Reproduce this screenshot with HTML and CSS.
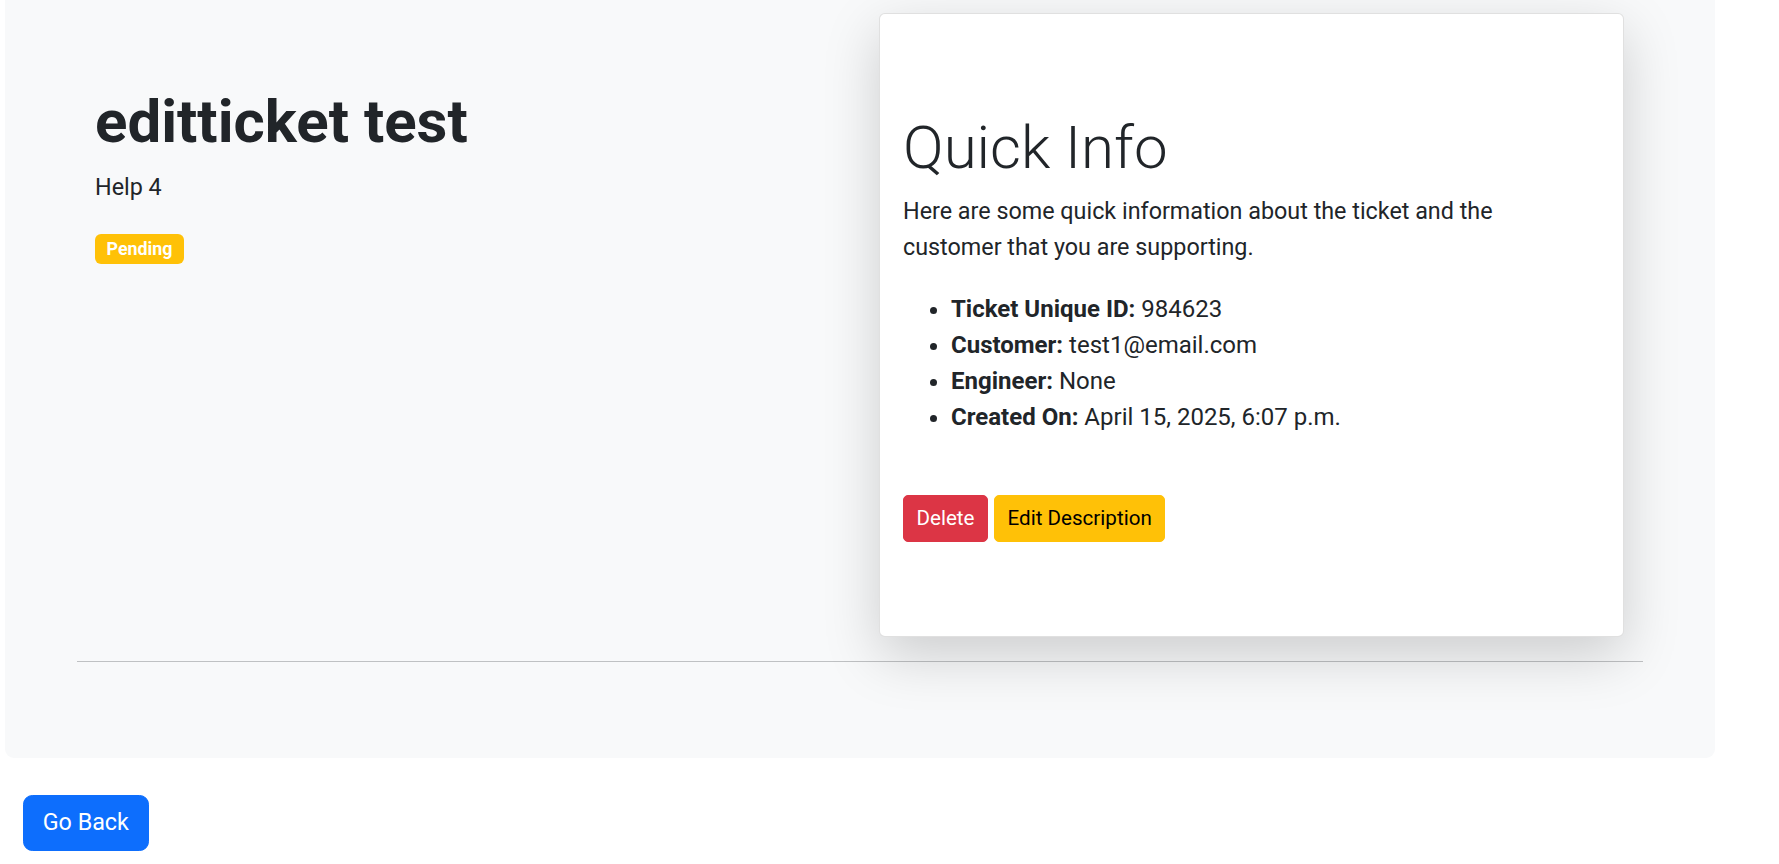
FILE: index.html
```html
<!DOCTYPE html>
<html lang="en">
<head>
<meta charset="utf-8">
<title>editticket test</title>
<link rel="stylesheet" href="styles.css">
</head>
<body>
<main class="page">
  <section class="jumbo">
    <div class="row">
      <div class="col-left">
        <h1 class="title">editticket test</h1>
        <p class="lead subtitle">Help 4</p>
        <div class="status"><span class="badge">Pending</span></div>
      </div>
      <div class="col-right">
        <div class="card">
          <h2 class="display">Quick Info</h2>
          <p class="lead intro">Here are some quick information about the ticket and the customer that you are supporting.</p>
          <ul class="info">
            <li><strong>Ticket Unique ID:</strong> 984623</li>
            <li><strong>Customer:</strong> test1@email.com</li>
            <li><strong>Engineer:</strong> None</li>
            <li><strong>Created On:</strong> April 15, 2025, 6:07 p.m.</li>
          </ul>
          <div class="actions">
            <button class="btn btn-danger">Delete</button>
            <button class="btn btn-warning">Edit Description</button>
          </div>
        </div>
      </div>
    </div>
    <hr class="divider">
  </section>
  <div class="back">
    <a class="btn-lg btn-primary" href="#">Go Back</a>
  </div>
</main>
</body>
</html>
```
FILE: styles.css
```css
* { box-sizing: border-box; }

html, body {
  margin: 0;
  padding: 0;
  background: #fff;
}

body {
  font-family: Roboto, "Liberation Sans", Arial, sans-serif;
  font-size: 18.67px;
  line-height: 1.5;
  color: #212529;
}

.jumbo {
  margin-left: 5px;
  width: 1710px;
  background: #f8f9fa;
  border-radius: 0 0 9px 9px;
  padding: 13px 72px 96px 72px;
}

.row {
  display: grid;
  grid-template-columns: 1fr 764px;
  align-items: start;
}

.col-left {
  padding: 73px 0 0 18px;
}

.title {
  font-size: 60px;
  font-weight: 700;
  line-height: 1.2;
  margin: 0 0 11px;
}

.lead {
  font-size: 23.33px;
  line-height: 36px;
  font-weight: 400;
}

.subtitle {
  margin: 0 0 29px;
}

.status {
  display: flex;
}

.badge {
  display: inline-block;
  font-size: 17.8px;
  font-weight: 700;
  line-height: 1;
  padding: 0.35em 0.65em;
  border-radius: 6px;
  background: #ffc107;
  color: #fff;
}

.card {
  width: 745px;
  background: #fff;
  border: 1px solid rgba(0, 0, 0, 0.12);
  border-radius: 6px;
  box-shadow: 0 18.67px 56px rgba(0, 0, 0, 0.175);
  padding: 98px 40px 94px 23px;
}

.display {
  font-size: 60px;
  font-weight: 300;
  line-height: 1.2;
  margin: 0 0 9px;
}

.intro {
  margin: 0 0 26px;
}

.info {
  margin: 0 0 60px;
  padding-left: 48px;
  font-size: 24px;
  line-height: 36px;
}

.info strong {
  font-weight: 700;
}

.actions {
  display: flex;
  gap: 6px;
}

.btn {
  font-family: inherit;
  font-size: 20.6px;
  line-height: 1.5;
  padding: 7px 12.5px;
  border-radius: 5px;
  border: 1px solid transparent;
  cursor: pointer;
}

.btn-danger {
  background: #dc3545;
  border-color: #dc3545;
  color: #fff;
}

.btn-warning {
  background: #ffc107;
  border-color: #ffc107;
  color: #000;
}

.divider {
  margin: 24px 0 0;
  border: 0;
  border-top: 1px solid #bfc1c3;
  height: 0;
}

.back {
  padding: 37px 0 0 23px;
  display: flex;
}

.btn-lg {
  display: inline-block;
  font-size: 23.33px;
  line-height: 1.5;
  padding: 9.33px 18.67px;
  border-radius: 9.33px;
  border: 1px solid #0d6efd;
  text-decoration: none;
}

.btn-primary {
  background: #0d6efd;
  color: #fff;
}
```
